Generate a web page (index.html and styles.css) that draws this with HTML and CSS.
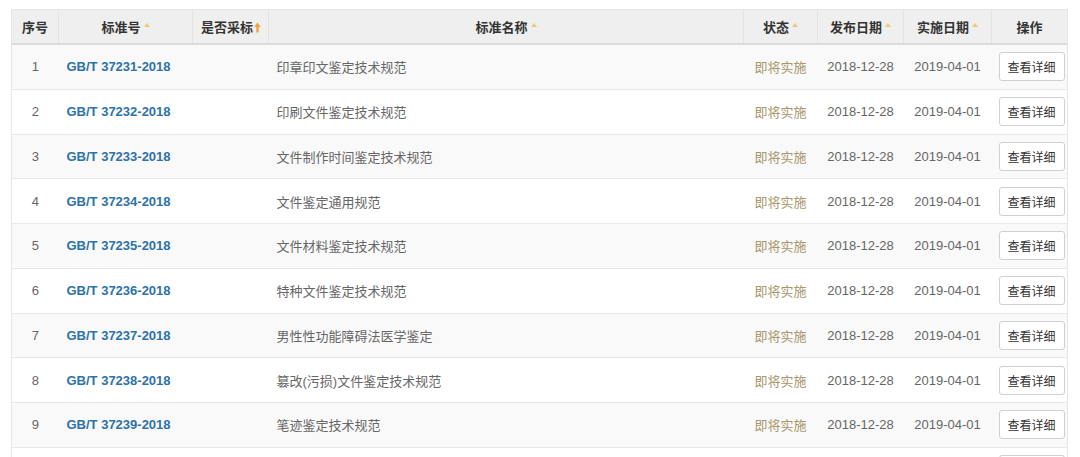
FILE: index.html
```
<!DOCTYPE html>
<html lang="zh-CN">
<head>
<meta charset="utf-8">
<link rel="stylesheet" href="styles.css">
</head>
<body>
<div class="wrap">
<table class="std">
  <colgroup>
    <col class="c-no"><col class="c-code"><col class="c-adopt"><col class="c-name"><col class="c-state"><col class="c-pub"><col class="c-impl"><col class="c-op">
  </colgroup>
  <thead>
    <tr>
      <th class="center">序号</th>
      <th class="center">标准号<span class="sort"></span></th>
      <th class="left">是否采标<svg class="up" viewBox="0 0 7 11" width="7" height="11"><path d="M3.5 0.5 L6.8 5 H4.7 V10.5 H2.3 V5 H0.2 Z" fill="#f0a33a"/></svg></th>
      <th class="center">标准名称<span class="sort"></span></th>
      <th class="center">状态<span class="sort"></span></th>
      <th class="center">发布日期<span class="sort"></span></th>
      <th class="center">实施日期<span class="sort"></span></th>
      <th class="center">操作</th>
    </tr>
  </thead>
  <tbody>
    <tr><td class="center">1</td><td><a class="code">GB/T 37231-2018</a></td><td></td><td>印章印文鉴定技术规范</td><td class="center state">即将实施</td><td class="center">2018-12-28</td><td class="center">2019-04-01</td><td class="op"><button class="btn">查看详细</button></td></tr>
    <tr><td class="center">2</td><td><a class="code">GB/T 37232-2018</a></td><td></td><td>印刷文件鉴定技术规范</td><td class="center state">即将实施</td><td class="center">2018-12-28</td><td class="center">2019-04-01</td><td class="op"><button class="btn">查看详细</button></td></tr>
    <tr><td class="center">3</td><td><a class="code">GB/T 37233-2018</a></td><td></td><td>文件制作时间鉴定技术规范</td><td class="center state">即将实施</td><td class="center">2018-12-28</td><td class="center">2019-04-01</td><td class="op"><button class="btn">查看详细</button></td></tr>
    <tr><td class="center">4</td><td><a class="code">GB/T 37234-2018</a></td><td></td><td>文件鉴定通用规范</td><td class="center state">即将实施</td><td class="center">2018-12-28</td><td class="center">2019-04-01</td><td class="op"><button class="btn">查看详细</button></td></tr>
    <tr><td class="center">5</td><td><a class="code">GB/T 37235-2018</a></td><td></td><td>文件材料鉴定技术规范</td><td class="center state">即将实施</td><td class="center">2018-12-28</td><td class="center">2019-04-01</td><td class="op"><button class="btn">查看详细</button></td></tr>
    <tr><td class="center">6</td><td><a class="code">GB/T 37236-2018</a></td><td></td><td>特种文件鉴定技术规范</td><td class="center state">即将实施</td><td class="center">2018-12-28</td><td class="center">2019-04-01</td><td class="op"><button class="btn">查看详细</button></td></tr>
    <tr><td class="center">7</td><td><a class="code">GB/T 37237-2018</a></td><td></td><td>男性性功能障碍法医学鉴定</td><td class="center state">即将实施</td><td class="center">2018-12-28</td><td class="center">2019-04-01</td><td class="op"><button class="btn">查看详细</button></td></tr>
    <tr><td class="center">8</td><td><a class="code">GB/T 37238-2018</a></td><td></td><td>篡改(污损)文件鉴定技术规范</td><td class="center state">即将实施</td><td class="center">2018-12-28</td><td class="center">2019-04-01</td><td class="op"><button class="btn">查看详细</button></td></tr>
    <tr><td class="center">9</td><td><a class="code">GB/T 37239-2018</a></td><td></td><td>笔迹鉴定技术规范</td><td class="center state">即将实施</td><td class="center">2018-12-28</td><td class="center">2019-04-01</td><td class="op"><button class="btn">查看详细</button></td></tr>
    <tr class="tail"><td></td><td></td><td></td><td></td><td></td><td></td><td></td><td class="op"><span class="btn-stub"></span></td></tr>
  </tbody>
</table>
</div>
</body>
</html>
```
FILE: styles.css
```
html, body {
  margin: 0;
  padding: 0;
  background: #ffffff;
  overflow: hidden;
}
body {
  font-family: "Liberation Sans", Arial, "Noto Sans CJK SC", sans-serif;
  font-size: 13px;
  color: #666666;
}
.wrap {
  padding: 9px 13px 0 11px;
}
.std {
  width: 1056px;
  border-collapse: collapse;
  table-layout: fixed;
  border: 1px solid #e6e6e6;
}
.c-no { width: 47px; }
.c-code { width: 134px; }
.c-adopt { width: 76px; }
.c-name { width: 475px; }
.c-state { width: 74px; }
.c-pub { width: 86px; }
.c-impl { width: 88px; }
.c-op { width: 76px; }

.std th {
  height: 33px;
  padding: 0 8px;
  background: #efefef;
  color: #333333;
  font-weight: bold;
  font-size: 13px;
  border-left: 1px solid #e3e3e3;
  border-bottom: 2px solid #dcdcdc;
  white-space: nowrap;
}
.std th:first-child { border-left: none; }
.std td {
  height: 43.75px;
  padding: 0 8px;
  border-bottom: 1px solid #e8e8e8;
  vertical-align: middle;
  white-space: nowrap;
}
.std tbody tr:nth-child(odd) td { background: #f9f9f9; }
.std tbody tr:nth-child(even) td { background: #ffffff; }
.std tbody tr.tail td { vertical-align: top; padding-top: 7px; }
.center { text-align: center; }
.left { text-align: left; }
.code {
  color: #2d72a8;
  font-weight: bold;
  text-decoration: none;
}
.state { color: #a8976a; }
.sort {
  display: inline-block;
  width: 0;
  height: 0;
  margin-left: 3px;
  vertical-align: 5px;
  border-left: 3px solid transparent;
  border-right: 3px solid transparent;
  border-bottom: 4px solid #f2c878;
}
.up {
  vertical-align: -1px;
  margin-left: 1px;
}
.std td.op { padding: 0 2px 0 7px; }
.btn {
  font-family: "Liberation Sans", Arial, "Noto Sans CJK SC", sans-serif;
  font-size: 12px;
  color: #333333;
  background: #ffffff;
  border: 1px solid #d0d0d0;
  border-radius: 3px;
  height: 29px;
  width: 66px;
  padding: 0;
  cursor: pointer;
}
.btn-stub {
  display: block;
  box-sizing: border-box;
  width: 66px;
  height: 29px;
  background: #ffffff;
  border: 1px solid #d0d0d0;
  border-radius: 3px;
}
```
